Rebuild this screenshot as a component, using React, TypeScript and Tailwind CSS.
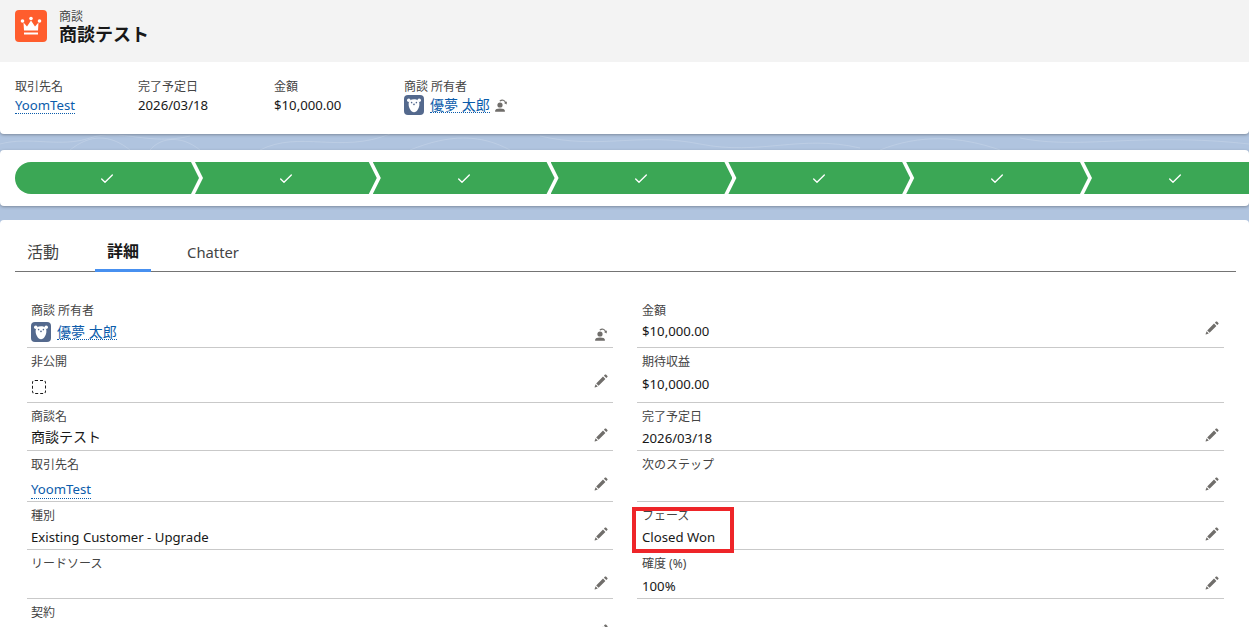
import React from 'react';
import { Check } from 'lucide-react';

const Pencil = () => (
  <svg viewBox="0 0 14 14" className="w-[14px] h-[14px] fill-[#706e6b]">
    <path d="M11 .6c.3-.3.7-.3 1 0l1.400 1.400c.3.3.3.7 0 1L12.300 4.100 9.900 1.700 11 .6zM9 2.600 11.400 5 4.600 11.800 2.200 9.400 9 2.600zM1.600 10.200 3.800 12.400.9 13.400c-.2.1-.4-.1-.3-.3l1-2.900z" />
  </svg>
);

const OwnerChange = () => (
  <svg viewBox="0 0 14 14" className="w-[14px] h-[14px] fill-[#706e6b]">
    <circle cx="6" cy="7" r="2.600" />
    <path d="M1 13.200c0-1.900 2.200-2.600 5-2.600s5 .7 5 2.600c0 .3-.2.5-.5.5h-9c-.3 0-.5-.2-.5-.5z" />
    <path d="M5.400 2.700C7.600.6 10.600 1.200 11.900 4l1.100-.5-.4 3-2.600-1.400 1-.5C10.100 2.700 8 2.300 6.300 3.600z" />
  </svg>
);

const Bear = () => (
  <span className="flex items-center justify-center w-5 h-5 rounded-[4px] bg-[#54698d] shrink-0">
    <svg viewBox="0 0 20 20" className="w-5 h-5">
      <circle cx="4.800" cy="5.200" r="1.800" fill="#fff" />
      <circle cx="15.200" cy="5.200" r="1.800" fill="#fff" />
      <path d="M10 4.200c3.400 0 5.400 1.800 5.400 4.800 0 4-2.400 8.200-5.400 8.200S4.600 13 4.600 9c0-3 2-4.800 5.400-4.800z" fill="#fff" />
      <circle cx="7.600" cy="7.600" r=".8" fill="#54698d" />
      <circle cx="12.400" cy="7.600" r=".8" fill="#54698d" />
      <path d="M8.600 8.800h2.800L10 10.400z" fill="#54698d" />
    </svg>
  </span>
);

const Owner = () => (
  <span className="flex items-center gap-[6px]">
    <Bear />
    <span className="text-[14px] text-[#0b5cab] border-b border-dotted border-[#0b5cab] leading-[15px]">優夢 太郎</span>
  </span>
);

const Step = ({ first }: { first?: boolean }) => (
  <div
    className={
      first
        ? 'flex items-center justify-center shrink-0 h-8 w-[184px] bg-[#3ba755] rounded-l-full [clip-path:polygon(0_0,calc(100%-8px)_0,100%_50%,calc(100%-8px)_100%,0_100%)]'
        : 'flex items-center justify-center shrink-0 h-8 w-[181.8px] -ml-1 bg-[#3ba755] [clip-path:polygon(0_0,calc(100%-8px)_0,100%_50%,calc(100%-8px)_100%,0_100%,8px_50%)]'
    }
  >
    <Check size={16} strokeWidth={2} className="text-white translate-y-[1px]" />
  </div>
);

type RowProps = {
  label: string;
  height: string;
  valueTop: string;
  iconTop: string;
  inset?: string;
  icon?: React.ReactNode;
  children?: React.ReactNode;
  last?: boolean;
};

const Row = ({ label, height, valueTop, iconTop, inset = 'pl-1', icon = <Pencil />, children, last }: RowProps) => (
  <div className={`flex justify-between pt-[5px] pr-[5px] ${inset} ${height} ${last ? '' : 'border-b border-[#c9c9c9]'}`}>
    <div className="flex flex-col min-w-0">
      <span className="text-[12px] leading-[18px] text-[#444]">{label}</span>
      <div className={`text-[13.2px] leading-5 text-[#181818] ${valueTop}`}>{children}</div>
    </div>
    {icon ? <div className={`w-[14px] h-[14px] -translate-y-1 ${iconTop}`}>{icon}</div> : null}
  </div>
);

const Highlight = ({ label, width, children }: { label: string; width: string; children: React.ReactNode }) => (
  <div className={`flex flex-col ${width}`}>
    <span className="text-[12px] leading-[18px] text-[#444]">{label}</span>
    <div className="text-[13.2px] leading-5 text-[#181818] -mt-px">{children}</div>
  </div>
);

export default function App() {
  return (
    <div className="w-[1249px] h-[627px] overflow-hidden bg-[#b0c4df] font-['Noto_Sans','Noto_Sans_CJK_JP',sans-serif]">
      {/* Record header */}
      <div className="relative bg-white rounded-b-[4px] shadow-[0_1px_3px_rgba(0,0,0,0.3)]">
        <div className="h-[62px] bg-[#f3f3f3] flex items-start pl-[15px] pt-[10px] gap-3">
          <div className="w-8 h-8 rounded-[4px] bg-[#ff5d2d] flex items-center justify-center">
            <svg viewBox="0 0 32 32" className="w-8 h-8" fill="#fff">
              <circle cx="7.500" cy="11" r="1.800" />
              <circle cx="16" cy="8.500" r="1.800" />
              <circle cx="24.500" cy="11" r="1.800" />
              <path d="M8.500 12.500 12 16.500 16 10.500 20 16.500 23.500 12.500 23 20.500H9z" />
              <rect x="9" y="22.500" width="14" height="2" />
            </svg>
          </div>
          <div className="flex flex-col">
            <span className="text-[12px] leading-[14px] text-[#444]">商談</span>
            <span className="text-[18px] leading-[20px] font-bold text-[#181818]">商談テスト</span>
          </div>
        </div>
        <div className="h-[72px] flex pl-[15px] pt-4">
          <Highlight label="取引先名" width="w-[123px]">
            <span className="text-[#0b5cab] border-b border-dotted border-[#0b5cab] leading-[15px] inline-block mt-px">YoomTest</span>
          </Highlight>
          <Highlight label="完了予定日" width="w-[136px]">2026/03/18</Highlight>
          <Highlight label="金額" width="w-[130px]">$10,000.00</Highlight>
          <Highlight label="商談 所有者" width="w-[140px]">
            <span className="flex items-center gap-[4px]">
              <Owner />
              <span className="w-[14px] h-[14px]"><OwnerChange /></span>
            </span>
          </Highlight>
        </div>
      </div>

      {/* Faint background linework between the cards */}
      <svg viewBox="0 0 1249 16" className="block w-[1249px] h-4" fill="none" stroke="#fff" strokeOpacity="0.16">
        <path d="M0 10C30 2 60 14 90 4S150 12 190 2" />
        <path d="M70 16C90 0 110 0 130 16M150 16C160 4 180 0 200 16" />
        <path d="M260 16C300 -4 340 20 390 0M410 16C450 0 480 0 510 16" />
        <path d="M540 2C600 16 640 -2 700 10S800 0 860 14" />
        <path d="M880 16C920 0 960 2 1000 16M1020 4C1080 16 1140 -2 1249 10" />
      </svg>

      {/* Path */}
      <div className="relative h-14 bg-white rounded-[4px] shadow-[0_1px_3px_rgba(0,0,0,0.3)] pl-[15px] pt-3 flex overflow-hidden">
        <Step first />
        <Step />
        <Step />
        <Step />
        <Step />
        <Step />
        <Step />
        <Step />
      </div>

      {/* Detail */}
      <div className="mt-[14px] h-[407px] bg-white rounded-t-[4px] overflow-hidden">
        <div className="ml-[15px] mr-[13px] h-[52px] flex gap-6 border-b border-[#747474] text-[16px]">
          <div className="px-3 h-[52px] pt-[12px] flex items-center text-[#444]">活動</div>
          <div className="px-3 h-[52px] pt-[13px] flex items-center font-bold text-[#181818] border-b-[3px] border-[#4790f0]">詳細</div>
          <div className="px-3 h-[52px] pt-[12px] flex items-center text-[#444] text-[14.8px]">Chatter</div>
        </div>
        <div className="mt-[25px] pl-[27px] pr-[25px] grid grid-cols-[586px_587px] gap-x-6">
          <Row label="商談 所有者" height="h-[51px]" valueTop="mt-[2px]" iconTop="mt-[29px]" icon={<OwnerChange />}><Owner /></Row>
          <Row inset="pl-[5px]" label="金額" height="h-[51px]" valueTop="mt-[1px]" iconTop="mt-[23px]">$10,000.00</Row>
          <Row label="非公開" height="h-[55px]" valueTop="mt-[9px]" iconTop="mt-[25px]">
            <div className="ml-[1px] w-[14px] h-[14px] rounded-[3px] border border-dashed border-[#181818]" />
          </Row>
          <Row inset="pl-[5px]" label="期待収益" height="h-[55px]" valueTop="mt-[3px]" iconTop="mt-0" icon={null}>$10,000.00</Row>
          <Row label="商談名" height="h-[48px]" valueTop="mt-[1px]" iconTop="mt-[24px]"><span className="text-[14px]">商談テスト</span></Row>
          <Row inset="pl-[5px]" label="完了予定日" height="h-[48px]" valueTop="mt-[2px]" iconTop="mt-[24px]">2026/03/18</Row>
          <Row label="取引先名" height="h-[51px]" valueTop="mt-[5px]" iconTop="mt-[25px]">
            <span className="text-[#0b5cab] border-b border-dotted border-[#0b5cab]">YoomTest</span>
          </Row>
          <Row inset="pl-[5px]" label="次のステップ" height="h-[51px]" valueTop="mt-[5px]" iconTop="mt-[25px]" />
          <Row label="種別" height="h-[48px]" valueTop="mt-[2px]" iconTop="mt-[24px]">Existing Customer - Upgrade</Row>
          <div className="relative">
            <Row inset="pl-[5px]" label="フェーズ" height="h-[48px]" valueTop="mt-[2px]" iconTop="mt-[24px]">Closed Won</Row>
            <div className="absolute -left-[5px] top-[5px] w-[102px] h-[46px] border-4 border-[#ee2529]" />
          </div>
          <Row label="リードソース" height="h-[49px]" valueTop="mt-[3px]" iconTop="mt-[25px]" />
          <Row inset="pl-[5px]" label="確度 (%)" height="h-[49px]" valueTop="mt-[3px]" iconTop="mt-[25px]">100%</Row>
          <Row label="契約" height="h-[49px]" valueTop="mt-[3px]" iconTop="mt-[24px]" last />
        </div>
      </div>
    </div>
  );
}
